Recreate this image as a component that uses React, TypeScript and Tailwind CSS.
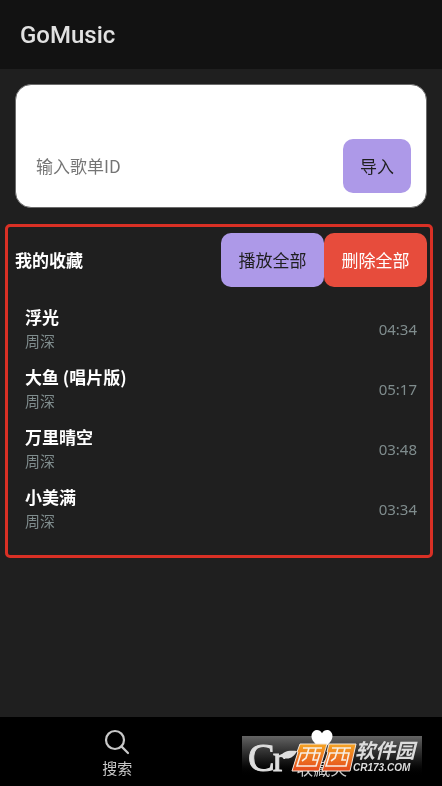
interface Song {
  title: string;
  artist: string;
  duration: string;
}

const SONGS: Song[] = [
  { title: "浮光", artist: "周深", duration: "04:34" },
  { title: "大鱼 (唱片版)", artist: "周深", duration: "05:17" },
  { title: "万里晴空", artist: "周深", duration: "03:48" },
  { title: "小美满", artist: "周深", duration: "03:34" },
];

function ImportCard() {
  return (
    <form
      className="mx-[15px] mt-[15px] h-[124px] flex items-end gap-3 rounded-2xl border border-[#6b6b6b] bg-white pl-5 pr-[15px] pb-[14px]"
      onSubmit={(e) => e.preventDefault()}
    >
      <input
        type="text"
        aria-label="输入歌单ID"
        placeholder="输入歌单ID"
        className="h-[54px] min-w-0 flex-1 bg-transparent pb-0.5 text-[17px] text-black outline-none placeholder:text-[#757575]"
      />
      <button type="submit" className="h-[54px] w-[68px] shrink-0 rounded-[10px] bg-[#ad99e8] text-[17px] text-[#1f1f1f]">
        导入
      </button>
    </form>
  );
}

function SongRow({ song }: { song: Song }) {
  return (
    <li className="flex h-[60px] items-center justify-between">
      <div>
        <p className="text-[17px] leading-6 font-bold text-white">{song.title}</p>
        <p className="text-[15px] leading-6 text-[#7f8c8d]">{song.artist}</p>
      </div>
      <span className="font-['Noto_Sans',sans-serif] text-[15px] text-[#7f8c8d]">{song.duration}</span>
    </li>
  );
}

function Favorites() {
  return (
    <section className="ml-[5px] mr-[9px] mt-4 rounded-[5px] border-[3px] border-[#d93025] pt-[6px] pb-4">
      <div className="flex items-center justify-between pl-[7px] pr-[3px]">
        <h2 className="text-[17px] font-bold text-white">我的收藏</h2>
        <div className="flex">
          <button type="button" className="h-[54px] w-[103px] rounded-[10px] bg-[#ad99e8] text-[17px] text-[#1f1f1f]">
            播放全部
          </button>
          <button type="button" className="h-[54px] w-[103px] rounded-[10px] bg-[#e74c3c] text-[17px] text-white">
            删除全部
          </button>
        </div>
      </div>
      <ul className="mt-3 pl-[17px] pr-[13px]">
        {SONGS.map((song) => (
          <SongRow key={song.title} song={song} />
        ))}
      </ul>
    </section>
  );
}

function SearchIcon() {
  return (
    <svg className="size-[26px]" viewBox="0 0 26 26" fill="none" stroke="currentColor" strokeWidth="2.2" aria-hidden="true">
      <circle cx="11" cy="11" r="9" />
      <path d="M17.4 17.4 24 24" strokeLinecap="round" />
    </svg>
  );
}

function HeartIcon() {
  return (
    <svg className="size-[26px]" viewBox="0 0 26 26" fill="white" aria-hidden="true">
      <path d="M13 24.5 4.5 14.5C1.7 10.8 2 6.6 4.4 4.4 7.2 2 11.2 2.9 13 6.2 14.8 2.9 18.8 2 21.6 4.4c2.4 2.2 2.7 6.4-.1 10.1Z" />
    </svg>
  );
}

// Site stamp that sits over the bottom right of the tab bar.
// The grey plate is screened so the heart and label stay bright under it.
function SiteStamp() {
  return (
    <>
      <div className="absolute bottom-2 right-5 h-[42px] w-[180px] bg-linear-to-b from-[#646464] to-black mix-blend-screen" />
      <svg
        className="absolute bottom-2 right-5 h-[42px] w-[180px]"
        viewBox="0 0 180 42"
        role="img"
        aria-label="Cr 西西软件园 CR173.COM"
      >
        <defs>
          <linearGradient id="tile" x1="0" y1="0" x2="0" y2="1">
            <stop offset="0" stopColor="#f5a524" />
            <stop offset="1" stopColor="#e5481c" />
          </linearGradient>
        </defs>
        <g fill="#dedede" stroke="#dedede" fontFamily="Liberation Serif, serif">
          <text x="6" y="35" fontSize="40" strokeWidth="1">
            C
          </text>
          <text x="31" y="35" fontSize="36" strokeWidth="1">
            r
          </text>
        </g>
        <path d="M39 21c1-6 8-7 16-6-3 6-8 9-13 7Z" fill="#dedede" />
        <g fill="url(#tile)" stroke="#f3e6dc" strokeWidth="1">
          <path d="M58 8h27l-8 27H50l6-19h-1Z" />
          <path d="M87 8h27l-6 27H80l6-19h-1Z" />
        </g>
        <g fill="none" stroke="#f7eee4" strokeWidth="1.6">
          <path d="M61 12h19M59 17h19l-4 13H55ZM67 12l-3 10-4 3M74 12l-3 12h4" />
          <path d="M90 12h19M88 17h19l-3 13H84ZM96 12l-3 10-4 3M103 12l-3 12h4" />
        </g>
        <g fill="#dcdcdc" fontStyle="italic" fontWeight="bold">
          <text x="113" y="22" fontSize="20" fontFamily="Noto Sans CJK SC, sans-serif">
            软件园
          </text>
          <text x="111" y="35" fontSize="10" fontFamily="Liberation Sans, sans-serif">
            CR173.COM
          </text>
        </g>
      </svg>
    </>
  );
}

function TabBar() {
  return (
    <nav className="relative mt-auto flex h-[69px] bg-black pl-[15px] pr-[18px] text-[15px] text-[#c8c8c8]">
      <a href="#search" className="flex flex-1 flex-col items-center pt-3">
        <SearchIcon />
        <span className="leading-[26px]">搜索</span>
      </a>
      <a href="#favorites" aria-current="page" className="flex flex-1 flex-col items-center pt-[10px] text-[17px]">
        <HeartIcon />
        <span className="leading-[30px]">收藏夹</span>
      </a>
      <SiteStamp />
    </nav>
  );
}

export default function App() {
  return (
    <div className="flex min-h-screen flex-col bg-[#1f1f1f] font-['Noto_Sans_CJK_SC',sans-serif]">
      <header className="flex h-[69px] items-center bg-[#121212] px-5">
        <h1 className="font-[Roboto,sans-serif] text-2xl font-medium text-[#e1e1e1]">GoMusic</h1>
      </header>
      <ImportCard />
      <Favorites />
      <TabBar />
    </div>
  );
}
